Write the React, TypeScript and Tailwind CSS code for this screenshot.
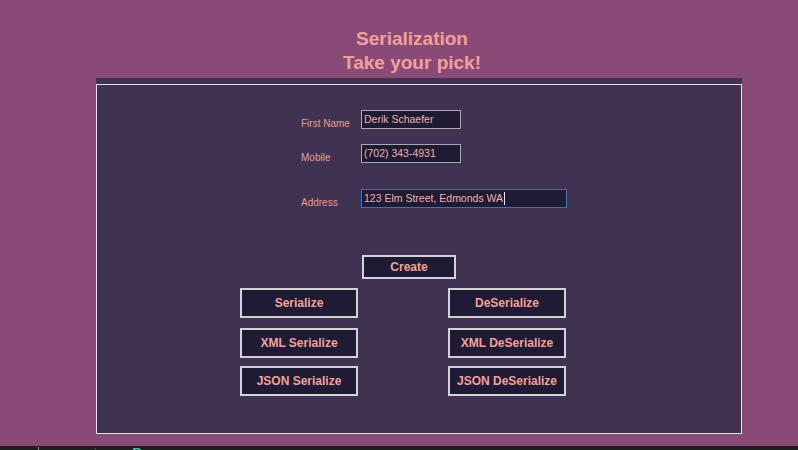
const SALMON = 'text-[#f3a198]'

function Field({ label, value, focused, top }: { label: string; value: string; focused?: boolean; top: string }) {
  return (
    <div className={`flex items-start h-[19px] pl-[204px] ${top}`}>
      <div className="w-[60px] mt-[8px] text-[10px] leading-[11px] text-[#e89b8f]">{label}</div>
      <div
        className={`flex items-center h-[19px] pl-[2px] bg-[#1f1b35] border ${
          focused ? 'border-[#1a7fd6] w-[206px]' : 'border-[#a9a9b0] w-[100px]'
        } text-[10.5px] text-[#f0b2ac] whitespace-nowrap overflow-hidden`}
      >
        <span>{value}</span>
        {focused && <span className="ml-px w-px h-[13px] bg-[#e8e8e8]" />}
      </div>
    </div>
  )
}

function Btn({ children, w = 'w-[118px]', h = 'h-[30px]' }: { children: string; w?: string; h?: string }) {
  return (
    <div className={`${w} ${h} flex items-center justify-center bg-[#1f1b35] border-2 border-[#d4d2d6] text-[12px] font-bold ${SALMON}`}>
      {children}
    </div>
  )
}

export default function App() {
  return (
    <div className="w-full h-[450px] bg-[#8a4a78] flex flex-col overflow-hidden" style={{ fontFamily: '"Liberation Sans", Arial, sans-serif' }}>
      {/* Title */}
      <div className={`pt-[27px] pl-[26px] text-center text-[19px] leading-[24px] font-bold ${SALMON}`}>
        <div>Serialization</div>
        <div>Take your pick!</div>
      </div>

      {/* Panel */}
      <div className="mt-[3px] ml-[96px] w-[646px] h-[356px] pt-[6px] bg-[#403352]">
        <div className="h-[350px] border border-[#e4e2e8] flex flex-col">
          <Field label="First Name" value="Derik Schaefer" top="mt-[25px]" />
          <Field label="Mobile" value="(702) 343-4931" top="mt-[15px]" />
          <Field label="Address" value="123 Elm Street, Edmonds WA" focused top="mt-[26px]" />

          <div className="mt-[47px] pl-[265px]">
            <Btn w="w-[94px]" h="h-[24px]">Create</Btn>
          </div>

          <div className="mt-[9px] pl-[143px] flex gap-[90px]">
            <Btn>Serialize</Btn>
            <Btn>DeSerialize</Btn>
          </div>
          <div className="mt-[10px] pl-[143px] flex gap-[90px]">
            <Btn>XML Serialize</Btn>
            <Btn>XML DeSerialize</Btn>
          </div>
          <div className="mt-[8px] pl-[143px] flex gap-[90px]">
            <Btn>JSON Serialize</Btn>
            <Btn>JSON DeSerialize</Btn>
          </div>
        </div>
      </div>

      {/* Editor strip peeking below */}
      <div className="mt-[12px] h-[4px] bg-[#1e1e1e] flex items-start overflow-hidden">
        <span className="ml-[38px] mt-[1px] w-px h-[3px] bg-[#8a8a8a]" />
        <span className="ml-[56px] mt-[2px] w-px h-px bg-[#6a6a6a]" />
        <div className="ml-[36px] text-[17px] leading-none whitespace-nowrap" style={{ fontFamily: '"Liberation Mono", monospace' }}>
          <span className="text-[#4ec9b0]">Person</span>
          <span className="text-[#dcdcdc]"> person;</span>
        </div>
      </div>
    </div>
  )
}
